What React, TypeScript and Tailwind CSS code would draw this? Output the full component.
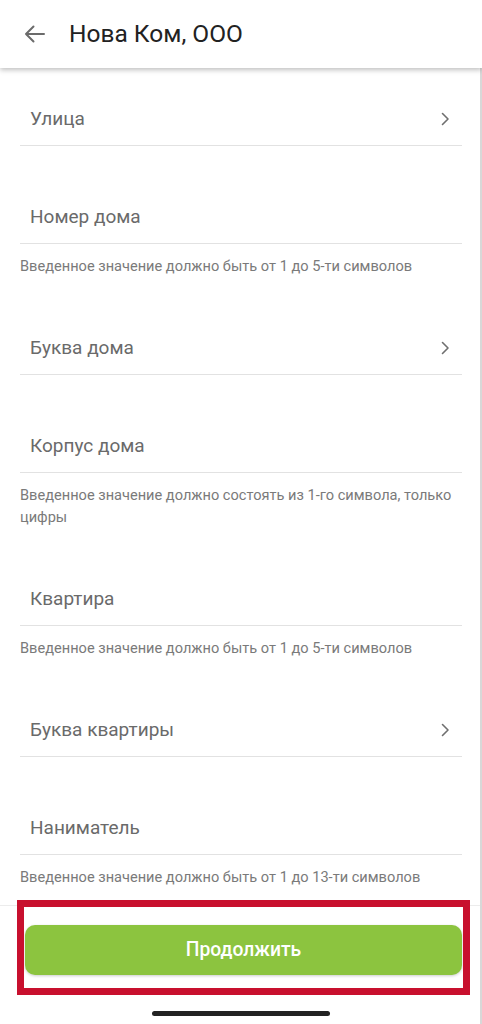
import React from "react";

const Chevron = () => (
  <svg width="10" height="14" viewBox="0 0 10 14" fill="none" className="shrink-0">
    <path d="M2.5 1.5 L8 7 L2.5 12.5" stroke="#6f6f6f" strokeWidth="1.6" strokeLinecap="round" strokeLinejoin="round" />
  </svg>
);

type FieldProps = { label: string; chevron?: boolean; helper?: string; first?: boolean };

const Field = ({ label, chevron, helper, first }: FieldProps) => (
  <div className={first ? "mt-[24px]" : "mt-[44px]"}>
    <div className="mx-[20px] h-[54px] flex items-center justify-between border-b border-[#e2e2e2] pl-[10px] pr-[12px]">
      <span className="text-[19px] text-[#6a6a6a] translate-y-[1px]">{label}</span>
      {chevron && <Chevron />}
    </div>
    {helper && (
      <div className="px-[20px] pt-[11px] text-[14.6px] leading-[22px] text-[#7a7a7a]">{helper}</div>
    )}
  </div>
);

export default function App() {
  return (
    <div
      className="w-[482px] h-[1024px] bg-white flex flex-col overflow-hidden relative"
      style={{ fontFamily: "Roboto, 'Noto Sans', sans-serif" }}
    >
      <div className="h-[68px] shrink-0 flex items-center bg-white shadow-[0_2px_5px_rgba(0,0,0,0.25)] z-10 relative">
        <svg width="24" height="20" viewBox="0 0 24 20" fill="none" className="ml-[23px]">
          <path d="M21 10 H3 M10.5 2.5 L3 10 L10.5 17.5" stroke="#6b6b6b" strokeWidth="2" strokeLinecap="round" strokeLinejoin="round" />
        </svg>
        <span className="ml-[22px] text-[24.5px] text-[#222222]">Нова Ком, ООО</span>
      </div>

      <div className="flex-1 overflow-hidden">
        <Field first label="Улица" chevron />
        <Field label="Номер дома" helper="Введенное значение должно быть от 1 до 5-ти символов" />
        <Field label="Буква дома" chevron />
        <Field label="Корпус дома" helper="Введенное значение должно состоять из 1-го символа, только цифры" />
        <Field label="Квартира" helper="Введенное значение должно быть от 1 до 5-ти символов" />
        <Field label="Буква квартиры" chevron />
        <Field label="Наниматель" helper="Введенное значение должно быть от 1 до 13-ти символов" />
      </div>

      <div className="h-[119px] shrink-0 border-t border-[#ececec] relative flex flex-col">
        <div className="mt-[19px] ml-[25px] mr-[20px] h-[50px] rounded-[10px] bg-[#8cc43f] shadow-[0_1px_3px_rgba(0,0,0,0.2)] flex items-center justify-center">
          <span className="text-[19.3px] font-medium text-white">Продолжить</span>
        </div>
        <div className="absolute left-[17px] top-[-6px] w-[453px] h-[95px] border-[7px] border-[#c8102e] pointer-events-none" />
        <div className="mt-auto mb-[8px] mx-auto w-[178px] h-[5px] rounded-full bg-[#222222]" />
      </div>
      <div className="absolute right-0 top-0 w-[2px] h-full bg-[#d8d8d8]" />
    </div>
  );
}
